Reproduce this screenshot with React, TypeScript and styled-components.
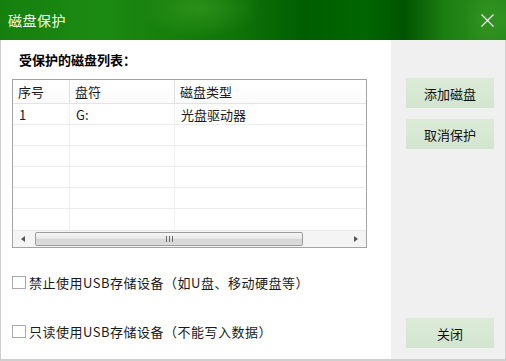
import styled, { createGlobalStyle } from "styled-components";

const GlobalStyle = createGlobalStyle`
  html, body {
    margin: 0;
    padding: 0;
    background: #ffffff;
  }
  body {
    font-family: "Noto Sans CJK SC", "Noto Sans", "Liberation Sans", sans-serif;
    font-size: 13px;
    color: #000;
  }
`;

const Window = styled.div`
  width: 506px;
  height: 361px;
  display: flex;
  flex-direction: column;
  overflow: hidden;
`;

const TitleBar = styled.div`
  height: 40px;
  flex-shrink: 0;
  display: flex;
  align-items: center;
  justify-content: space-between;
  padding: 0 12px 0 8px;
  background:
    radial-gradient(ellipse 60px 30px at 200px 8px, rgba(70, 170, 40, 0.45), transparent),
    radial-gradient(ellipse 40px 40px at 500px 20px, rgba(60, 160, 40, 0.5), transparent),
    linear-gradient(
      90deg,
      #16800e 0%,
      #1b8a12 20%,
      #167e0c 35%,
      #0e7208 48%,
      #005e00 60%,
      #006600 72%,
      #005400 80%,
      #1d7f12 88%,
      #2a8a1c 96%,
      #22841a 100%
    );
`;

const Title = styled.span`
  color: #f4fff0;
  font-size: 14px;
  letter-spacing: 0.5px;
`;

const CloseIcon = styled.svg`
  width: 13px;
  height: 13px;
  display: block;
`;

const Body = styled.div`
  flex: 1;
  display: flex;
  border-left: 1px solid #cfcfcf;
  border-right: 1px solid #cfcfcf;
  border-bottom: 2px solid #cfcfcf;
`;

const LeftPanel = styled.div`
  width: 390px;
  background: #ffffff;
  display: flex;
  flex-direction: column;
  padding-left: 11px;
  box-sizing: border-box;
`;

const Heading = styled.div`
  margin-top: 10px;
  height: 20px;
  line-height: 20px;
  padding-left: 7px;
  font-weight: bold;
  font-size: 13px;
`;

const Table = styled.div`
  margin-top: 9px;
  width: 355px;
  height: 169px;
  border: 1px solid #a3a3a3;
  box-sizing: border-box;
  display: flex;
  flex-direction: column;
`;

const Row = styled.div<{ header?: boolean; last?: boolean }>`
  display: grid;
  grid-template-columns: 57px 105px 1fr;
  height: ${(p) => (p.header ? 24 : 21)}px;
  flex-shrink: 0;
  box-sizing: border-box;
  border-bottom: ${(p) => (p.last ? "none" : p.header ? "1px solid #e3e3e3" : "1px solid #ececec")};
  background: ${(p) => (p.header ? "linear-gradient(#ffffff, #fbfbfb)" : "#ffffff")};
`;

const Cell = styled.div<{ header?: boolean; divider?: boolean }>`
  display: flex;
  align-items: center;
  padding-left: ${(p) => (p.header ? 5 : 6)}px;
  border-right: ${(p) => (p.divider ? (p.header ? "1px solid #e0e0e0" : "1px solid #f0f0f0") : "none")};
  font-size: 13px;
  color: #1a1a1a;
  white-space: nowrap;
`;

const Filler = styled.div`
  flex: 1;
  display: grid;
  grid-template-columns: 57px 105px 1fr;
`;

const ScrollBar = styled.div`
  height: 17px;
  flex-shrink: 0;
  display: flex;
  align-items: center;
  background: #f4f4f4;
  border-top: 1px solid #e8e8e8;
  padding: 0 2px;
  box-sizing: border-box;
`;

const Arrow = styled.div<{ dir: "left" | "right" }>`
  width: 0;
  height: 0;
  border-top: 3.5px solid transparent;
  border-bottom: 3.5px solid transparent;
  ${(p) => (p.dir === "left" ? "border-right: 4px solid #555;" : "border-left: 4px solid #555;")}
  margin: 0 6px;
`;

const Track = styled.div`
  flex: 1;
  height: 15px;
  display: flex;
  align-items: center;
`;

const Thumb = styled.div`
  width: 268px;
  height: 14px;
  margin-left: 4px;
  border: 1px solid #9c9c9c;
  border-radius: 2px;
  box-sizing: border-box;
  background: linear-gradient(#f6f6f6, #e6e6e6 50%, #d6d6d6 51%, #dcdcdc);
  display: flex;
  align-items: center;
  justify-content: center;
  gap: 2px;
`;

const Grip = styled.span`
  width: 1px;
  height: 6px;
  background: #6a6a6a;
`;

const OptionRow = styled.label<{ gap: number }>`
  display: flex;
  align-items: center;
  margin-top: ${(p) => p.gap}px;
  height: 18px;
  gap: 3px;
  font-size: 13px;
  letter-spacing: 0.5px;
  color: #1a1a1a;
`;

const Box = styled.span`
  width: 14px;
  height: 13px;
  flex-shrink: 0;
  box-sizing: border-box;
  border: 1px solid #a8a8a8;
  background: #fff;
  display: inline-block;
`;

const RightPanel = styled.div`
  flex: 1;
  background: #f0f0f0;
  display: flex;
  flex-direction: column;
  padding: 38px 0 11px 15px;
  box-sizing: border-box;
`;

const ActionButton = styled.button<{ pushDown?: boolean }>`
  width: 88px;
  height: 30px;
  border: none;
  padding: 0;
  margin-bottom: 11px;
  ${(p) => (p.pushDown ? "margin-top: auto; margin-bottom: 0;" : "")}
  background: linear-gradient(#dcebd8, #d2e5cf);
  font-family: inherit;
  font-size: 13px;
  color: #111;
  cursor: pointer;
`;

const rows = [
  { no: "1", drive: "G:", type: "光盘驱动器" },
  { no: "", drive: "", type: "" },
  { no: "", drive: "", type: "" },
  { no: "", drive: "", type: "" },
  { no: "", drive: "", type: "" },
];

export default function App() {
  return (
    <>
      <GlobalStyle />
      <Window>
        <TitleBar>
          <Title>磁盘保护</Title>
          <CloseIcon viewBox="0 0 13 13">
            <path d="M0.5 0.5 L12.5 12.5 M12.5 0.5 L0.5 12.5" stroke="#ffffff" strokeWidth="1.1" fill="none" />
          </CloseIcon>
        </TitleBar>
        <Body>
          <LeftPanel>
            <Heading>受保护的磁盘列表：</Heading>
            <Table>
              <Row header>
                <Cell header divider>序号</Cell>
                <Cell header divider>盘符</Cell>
                <Cell header>磁盘类型</Cell>
              </Row>
              {rows.map((r, i) => (
                <Row key={i}>
                  <Cell divider>{r.no}</Cell>
                  <Cell divider>{r.drive}</Cell>
                  <Cell>{r.type}</Cell>
                </Row>
              ))}
              <Filler>
                <Cell divider />
                <Cell divider />
                <Cell />
              </Filler>
              <ScrollBar>
                <Arrow dir="left" />
                <Track>
                  <Thumb>
                    <Grip />
                    <Grip />
                    <Grip />
                  </Thumb>
                </Track>
                <Arrow dir="right" />
              </ScrollBar>
            </Table>
            <OptionRow gap={25}>
              <Box />
              禁止使用USB存储设备（如U盘、移动硬盘等）
            </OptionRow>
            <OptionRow gap={31}>
              <Box />
              只读使用USB存储设备（不能写入数据）
            </OptionRow>
          </LeftPanel>
          <RightPanel>
            <ActionButton>添加磁盘</ActionButton>
            <ActionButton>取消保护</ActionButton>
            <ActionButton pushDown>关闭</ActionButton>
          </RightPanel>
        </Body>
      </Window>
    </>
  );
}
